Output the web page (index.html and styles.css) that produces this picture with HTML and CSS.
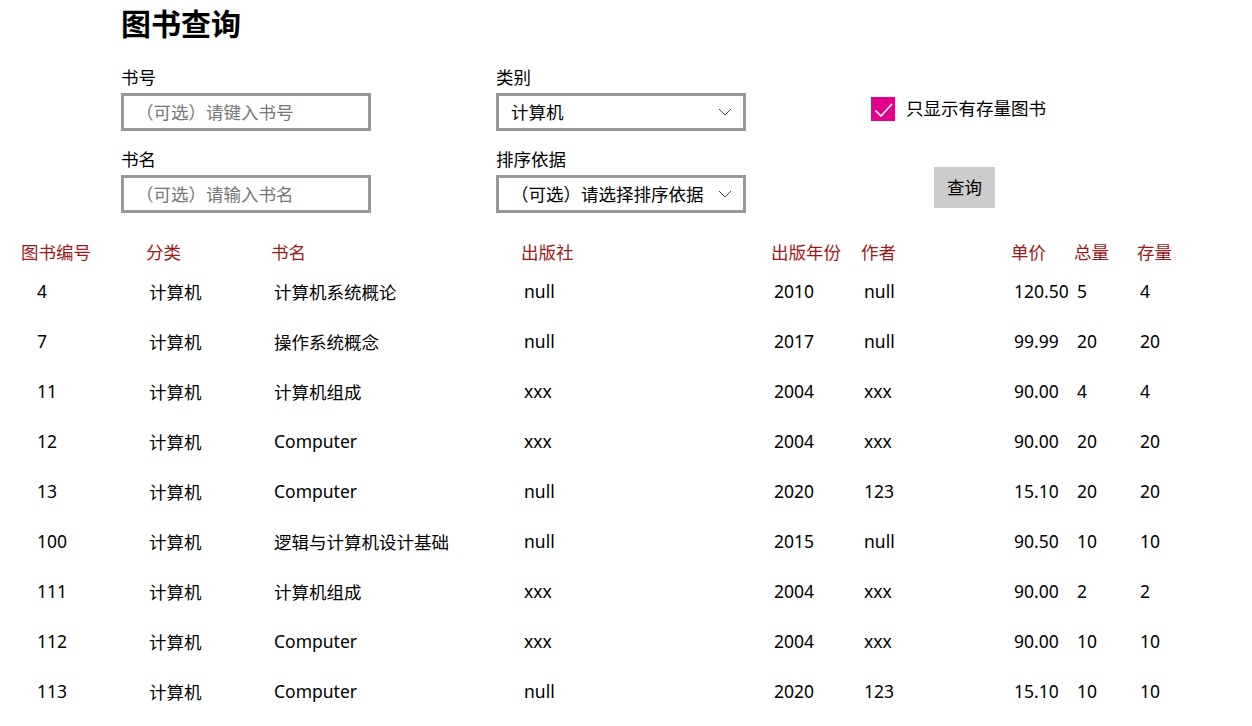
FILE: index.html
```html
<!DOCTYPE html>
<html lang="zh-CN">
<head>
<meta charset="utf-8">
<title>图书查询</title>
<link rel="stylesheet" href="styles.css">
</head>
<body>
<div class="page">
  <h1 class="title">图书查询</h1>
  <div class="form">
    <div class="col">
      <label class="field-label">书号</label>
      <div class="box"><span class="placeholder">（可选）请键入书号</span></div>
      <label class="field-label second">书名</label>
      <div class="box"><span class="placeholder">（可选）请输入书名</span></div>
    </div>
    <div class="col">
      <label class="field-label">类别</label>
      <div class="box select"><span class="value">计算机</span>
        <svg class="chev" width="14" height="8" viewBox="0 0 14 8"><path d="M1 1 L7 7 L13 1" fill="none" stroke="#444" stroke-width="1"/></svg>
      </div>
      <label class="field-label second">排序依据</label>
      <div class="box select"><span class="value">（可选）请选择排序依据</span>
        <svg class="chev" width="14" height="8" viewBox="0 0 14 8"><path d="M1 1 L7 7 L13 1" fill="none" stroke="#444" stroke-width="1"/></svg>
      </div>
    </div>
    <div class="col side">
      <div class="check-row">
        <span class="checkbox"><svg width="24" height="24" viewBox="0 0 24 24"><path d="M4.5 13.5 L10 19 L21 7" fill="none" stroke="#fff" stroke-width="1.6"/></svg></span>
        <span class="check-label">只显示有存量图书</span>
      </div>
      <button class="btn">查询</button>
    </div>
  </div>

  <div class="table">
    <div class="row head">
      <div>图书编号</div><div>分类</div><div>书名</div><div>出版社</div><div>出版年份</div><div>作者</div><div>单价</div><div>总量</div><div>存量</div>
    </div>
    <div class="row data"><div class="id">4</div><div>计算机</div><div>计算机系统概论</div><div>null</div><div>2010</div><div>null</div><div>120.50</div><div>5</div><div>4</div></div>
    <div class="row data"><div class="id">7</div><div>计算机</div><div>操作系统概念</div><div>null</div><div>2017</div><div>null</div><div>99.99</div><div>20</div><div>20</div></div>
    <div class="row data"><div class="id">11</div><div>计算机</div><div>计算机组成</div><div>xxx</div><div>2004</div><div>xxx</div><div>90.00</div><div>4</div><div>4</div></div>
    <div class="row data"><div class="id">12</div><div>计算机</div><div>Computer</div><div>xxx</div><div>2004</div><div>xxx</div><div>90.00</div><div>20</div><div>20</div></div>
    <div class="row data"><div class="id">13</div><div>计算机</div><div>Computer</div><div>null</div><div>2020</div><div>123</div><div>15.10</div><div>20</div><div>20</div></div>
    <div class="row data"><div class="id">100</div><div>计算机</div><div>逻辑与计算机设计基础</div><div>null</div><div>2015</div><div>null</div><div>90.50</div><div>10</div><div>10</div></div>
    <div class="row data"><div class="id">111</div><div>计算机</div><div>计算机组成</div><div>xxx</div><div>2004</div><div>xxx</div><div>90.00</div><div>2</div><div>2</div></div>
    <div class="row data"><div class="id">112</div><div>计算机</div><div>Computer</div><div>xxx</div><div>2004</div><div>xxx</div><div>90.00</div><div>10</div><div>10</div></div>
    <div class="row data"><div class="id">113</div><div>计算机</div><div>Computer</div><div>null</div><div>2020</div><div>123</div><div>15.10</div><div>10</div><div>10</div></div>
  </div>
</div>
</body>
</html>
```

FILE: styles.css
```css
* { box-sizing: border-box; }
html, body { margin: 0; padding: 0; background: #fff; }
body {
  font-family: "Noto Sans", "Noto Sans CJK SC", sans-serif;
  font-size: 17.5px;
  color: #000;
  overflow: hidden;
}
.page { width: 1252px; height: 726px; }
.title {
  margin: 0;
  padding-left: 121px;
  height: 46px;
  line-height: 44px;
  font-size: 30px;
  font-weight: 700;
  font-family: "Noto Sans CJK SC", sans-serif;
}
.form {
  display: flex;
  padding-left: 121px;
  margin-top: 20px;
  gap: 125px;
}
.col { display: flex; flex-direction: column; width: 250px; }
.field-label {
  display: block;
  height: 24px;
  line-height: 22px;
  margin-bottom: 3px;
  font-family: "Noto Sans CJK SC", sans-serif;
}
.field-label.second { margin-top: 17px; }
.box {
  height: 38px;
  border: 3px solid #999;
  display: flex;
  align-items: center;
  padding-left: 12px;
  padding-right: 12px;
  padding-bottom: 1px;
  font-family: "Noto Sans CJK SC", sans-serif;
}
.placeholder { color: #767676; }
.select { justify-content: space-between; }
.chev { flex: none; margin-right: -1px; }
.side { width: 200px; }
.check-row {
  display: flex;
  align-items: center;
  margin-top: 31px;
  height: 24px;
}
.checkbox {
  width: 24px; height: 24px;
  background: #e3008c;
  display: block;
  flex: none;
}
.checkbox svg { display: block; }
.check-label {
  margin-left: 11px;
  line-height: 20px;
  padding-bottom: 3px;
  font-family: "Noto Sans CJK SC", sans-serif;
}
.btn {
  margin-top: 46px;
  margin-left: 63px;
  width: 61px; height: 41px;
  background: #ccc;
  border: 0;
  padding: 0 0 2px;
  font: inherit;
  font-family: "Noto Sans CJK SC", sans-serif;
  color: #000;
}
.table { margin-top: 28px; padding-left: 21px; }
.row {
  display: grid;
  grid-template-columns: 125px 125px 250px 250px 90px 150px 63px 63px 1fr;
  align-items: center;
}
.row.head {
  height: 25px;
  line-height: 20px;
  padding-bottom: 4px;
  color: #a01818;
  font-family: "Noto Sans CJK SC", sans-serif;
}
.row.data { height: 50px; }
.row.data > div { padding-left: 3px; }
.row.data > div.id { padding-left: 16px; }
```
